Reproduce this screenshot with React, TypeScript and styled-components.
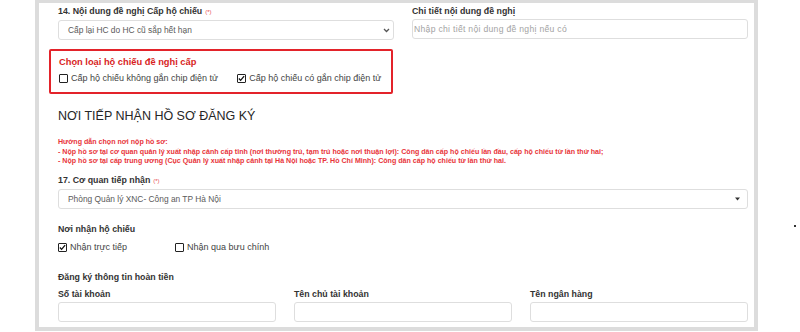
import styled, { createGlobalStyle } from "styled-components";

const GlobalStyle = createGlobalStyle`
  html, body {
    margin: 0;
    padding: 0;
    background: #ffffff;
  }
  body {
    font-family: "Liberation Sans", Arial, sans-serif;
    color: #333;
  }
  * {
    box-sizing: border-box;
  }
`;

const Page = styled.div`
  width: 800px;
  height: 332px;
  display: flex;
  align-items: flex-start;
  overflow: hidden;
`;

const Panel = styled.section`
  margin-left: 35px;
  width: 723px;
  border: 4px solid #dcdcdc;
  border-top-width: 3px;
  background: #fff;
  padding: 3px 6px 5px 19px;
`;

const Stray = styled.span`
  margin: 225px 0 0 36px;
  width: 2px;
  height: 2px;
  background: #333;
`;

const Grid = styled.div<{ $cols: number }>`
  display: grid;
  grid-template-columns: repeat(${({ $cols }) => $cols}, 1fr);
  column-gap: 18px;
`;

const Column = styled.div`
  display: flex;
  flex-direction: column;
`;

const Label = styled.div<{ $mt?: number }>`
  font-size: 8.8px;
  line-height: 10px;
  font-weight: 700;
  color: #333;
  margin-top: ${({ $mt }) => $mt ?? 0}px;
  margin-bottom: 3px;
  white-space: nowrap;
`;

const Required = styled.span`
  color: #e84a4a;
  font-weight: 400;
  font-size: 6px;
  margin-left: 3px;
`;

const Box = styled.div<{ $pr?: number }>`
  height: 20px;
  border: 1px solid #dedede;
  border-radius: 3px;
  background: #fff;
  display: flex;
  align-items: center;
  justify-content: space-between;
  padding: 0 ${({ $pr }) => $pr ?? 6}px 0 9px;
  font-size: 8.4px;
  color: #5a5a5a;
  white-space: nowrap;
`;

const Placeholder = styled.span`
  color: #a3a3a3;
  font-size: 8.6px;
  letter-spacing: 0.3px;
  margin-left: -8px;
`;

const Highlight = styled.div`
  margin: 9px 1px 0 -9px;
  height: 45px;
  border: 2px solid #e3232a;
  border-radius: 2px;
  padding: 6px 8px 0 8px;
`;

const RedTitle = styled.div`
  font-size: 9.3px;
  line-height: 10px;
  font-weight: 700;
  color: #d81e24;
  margin-bottom: 6px;
  white-space: nowrap;
`;

const CheckRow = styled.div<{ $gap: number; $mt?: number }>`
  display: flex;
  align-items: center;
  gap: ${({ $gap }) => $gap}px;
  margin-top: ${({ $mt }) => $mt ?? 0}px;
  height: 10px;
`;

const CheckItem = styled.label`
  display: flex;
  align-items: center;
  gap: 3px;
  font-size: 9px;
  color: #444;
  white-space: nowrap;
`;

const Square = styled.span`
  width: 9px;
  height: 9px;
  border: 1.3px solid #222;
  border-radius: 1px;
  display: flex;
  align-items: center;
  justify-content: center;
`;

const Heading = styled.h2`
  margin: 15px 0 0;
  font-size: 12.5px;
  line-height: 14px;
  font-weight: 500;
  color: #262626;
  white-space: nowrap;
`;

const Guide = styled.div`
  margin-top: 15px;
  font-size: 7.1px;
  line-height: 9.7px;
  font-weight: 700;
  color: #e8343a;
  white-space: nowrap;
`;

const Chevron = () => (
  <svg width="7" height="5" viewBox="0 0 7 5">
    <path d="M1 1 L3.5 3.5 L6 1" fill="none" stroke="#555" strokeWidth="1.3" />
  </svg>
);

const Caret = () => (
  <svg width="5" height="4" viewBox="0 0 5 4">
    <path d="M0 0.5 H5 L2.5 3.5 Z" fill="#333" />
  </svg>
);

const Check = ({ checked, children }: { checked: boolean; children: string }) => (
  <CheckItem>
    <Square>
      {checked && (
        <svg width="8" height="7" viewBox="0 0 8 7">
          <path d="M1 3.5 L3 5.6 L7 0.8" fill="none" stroke="#111" strokeWidth="1.5" />
        </svg>
      )}
    </Square>
    {children}
  </CheckItem>
);

const App = () => {
  return (
    <>
      <GlobalStyle />
      <Page>
        <Panel>
          <Grid $cols={2}>
            <Column>
              <Label>
                14. Nội dung đề nghị Cấp hộ chiếu<Required>(*)</Required>
              </Label>
              <Box $pr={3}>
                <span>Cấp lại HC do HC cũ sắp hết hạn</span>
                <Chevron />
              </Box>
              <Highlight>
                <RedTitle>Chọn loại hộ chiếu đề nghị cấp</RedTitle>
                <CheckRow $gap={19}>
                  <Check checked={false}>Cấp hộ chiếu không gắn chip điện tử</Check>
                  <Check checked>Cấp hộ chiếu có gắn chip điện tử</Check>
                </CheckRow>
              </Highlight>
            </Column>
            <Column>
              <Label>Chi tiết nội dung đề nghị</Label>
              <Box>
                <Placeholder>Nhập chi tiết nội dung đề nghị nếu có</Placeholder>
              </Box>
            </Column>
          </Grid>

          <Heading>NƠI TIẾP NHẬN HỒ SƠ ĐĂNG KÝ</Heading>

          <Guide>
            Hướng dẫn chọn nơi nộp hồ sơ:
            <br />- Nộp hồ sơ tại cơ quan quản lý xuất nhập cảnh cấp tỉnh (nơi thường trú, tạm trú hoặc nơi thuận lợi): Công dân cấp hộ chiếu lần đầu, cấp hộ chiếu từ lần thứ hai;
            <br />- Nộp hồ sơ tại cấp trung ương (Cục Quản lý xuất nhập cảnh tại Hà Nội hoặc TP. Hồ Chí Minh): Công dân cấp hộ chiếu từ lần thứ hai.
          </Guide>

          <Label $mt={8}>
            17. Cơ quan tiếp nhận<Required>(*)</Required>
          </Label>
          <Box $pr={7}>
            <span>Phòng Quản lý XNC- Công an TP Hà Nội</span>
            <Caret />
          </Box>

          <Label $mt={15}>Nơi nhận hộ chiếu</Label>
          <CheckRow $gap={48} $mt={8}>
            <Check checked>Nhận trực tiếp</Check>
            <Check checked={false}>Nhận qua bưu chính</Check>
          </CheckRow>

          <Label $mt={20}>Đăng ký thông tin hoàn tiền</Label>
          <Grid $cols={3}>
            <Column>
              <Label $mt={4}>Số tài khoản</Label>
              <Box />
            </Column>
            <Column>
              <Label $mt={4}>Tên chủ tài khoản</Label>
              <Box />
            </Column>
            <Column>
              <Label $mt={4}>Tên ngân hàng</Label>
              <Box />
            </Column>
          </Grid>
        </Panel>
        <Stray />
      </Page>
    </>
  );
};

export default App;
